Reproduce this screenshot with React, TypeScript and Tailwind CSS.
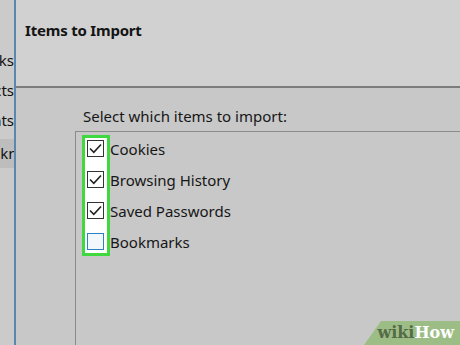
const font = { fontFamily: '"Noto Sans", "Open Sans", sans-serif' };

function Check({ checked }: { checked: boolean }) {
  if (!checked) {
    return <div className="w-[17px] h-[17px] border border-[#2f7fc4] bg-[#f2f7fc]" />;
  }
  return (
    <div className="w-[17px] h-[17px] border border-[#333] bg-white flex items-center justify-center">
      <svg width="13" height="11" viewBox="0 0 13 11">
        <path d="M1 5.5 L4.8 9.3 L12 1.5" fill="none" stroke="#222" strokeWidth="1.6" />
      </svg>
    </div>
  );
}

const items = [
  { label: "Cookies", checked: true },
  { label: "Browsing History", checked: true },
  { label: "Saved Passwords", checked: true },
  { label: "Bookmarks", checked: false },
];

function SideItem({ text, shift, active }: { text: string; shift: string; active?: boolean }) {
  return (
    <div className={`h-[29px] flex items-center justify-end overflow-hidden ${active ? "bg-[#bdbdbd]" : ""}`}>
      <span className={`whitespace-nowrap text-[15px] text-[#111] ${shift}`}>{text}</span>
    </div>
  );
}

export default function App() {
  return (
    <div className="w-[460px] h-[345px] flex overflow-hidden relative bg-[#c9c9c9]" style={font}>
      {/* left list, cut off */}
      <div className="w-[16px] shrink-0 bg-[#cbcbcb] border-r-2 border-[#5b86ad] flex flex-col pt-[46px] gap-[1px]">
        <SideItem text="Bookmarks" shift="mr-0" />
        <SideItem text="Contacts" shift="mr-0" />
        <SideItem text="Accounts" shift="mr-0" />
        <div className="h-[2px]" />
        <SideItem text="Bookmarks" shift="-mr-[38px]" active />
      </div>

      <div className="flex-1 flex flex-col">
        {/* header */}
        <div className="h-[88px] bg-[#d1d1d1] border-b-2 border-[#7c7c7c] pl-[9px] pt-[19px]">
          <div className="text-[15px] font-bold text-[#141414] tracking-[-0.2px]">Items to Import</div>
        </div>

        {/* body */}
        <div className="flex-1 bg-[#c8c8c8] pl-[59px] pt-[17px] flex flex-col">
          <div className="pl-[8px] text-[15px] text-[#161616] h-[26px]">Select which items to import:</div>
          <div className="flex-1 border-l border-t border-[#8b8b8b] pl-[6px] pt-[3px]">
            <div className="w-[28px] border-[3px] border-[#3fd83f] bg-white relative">
              <div className="flex flex-col pl-[2px] pt-[2px] pb-[3px] gap-[14px]">
                {items.map((it) => (
                  <div key={it.label} className="flex items-center h-[17px] relative">
                    <Check checked={it.checked} />
                    <span className="absolute left-[23px] top-[-2px] whitespace-nowrap text-[15px] text-[#161616]">
                      {it.label}
                    </span>
                  </div>
                ))}
              </div>
            </div>
          </div>
        </div>
      </div>

      {/* wikiHow badge */}
      <div className="absolute right-0 bottom-0 w-[96px] h-[24px] bg-[#9dbd86] flex items-center justify-end pr-[6px]"
        style={{ clipPath: "polygon(17px 0, 100% 0, 100% 100%, 0 100%)" }}>
        <span className="text-[16px] font-bold text-[#556b47]" style={{ fontFamily: '"DejaVu Serif", serif' }}>wiki</span>
        <span className="text-[16px] font-bold text-white" style={{ fontFamily: '"DejaVu Serif", serif' }}>How</span>
      </div>
    </div>
  );
}
